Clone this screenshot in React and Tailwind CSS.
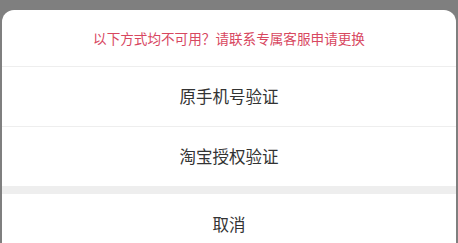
function Option({ label }) {
  return (
    <button className="h-[59px] w-full flex items-center justify-center text-[16.5px] text-[#333333]">
      {label}
    </button>
  );
}

export default function App() {
  return (
    <div className="w-[458px] h-[243px] overflow-hidden bg-[#7f7f7f] pt-[10px] px-[2px] font-['Noto_Sans_CJK_SC',sans-serif]">
      <div className="bg-white rounded-t-[12px] flex flex-col">
        {/* Notice */}
        <div className="h-[56px] flex items-center justify-center text-[13.6px] text-[#d8475f]">
          以下方式均不可用？请联系专属客服申请更换
        </div>
        <div className="h-px bg-[#eeeeee]" />
        <Option label="原手机号验证" />
        <div className="h-px bg-[#eeeeee]" />
        <Option label="淘宝授权验证" />

        {/* Separator */}
        <div className="h-[8px] bg-[#eeeeee]" />

        <button className="h-[60px] w-full flex items-center justify-center text-[16.5px] text-[#333333]">
          取消
        </button>
      </div>
    </div>
  );
}
